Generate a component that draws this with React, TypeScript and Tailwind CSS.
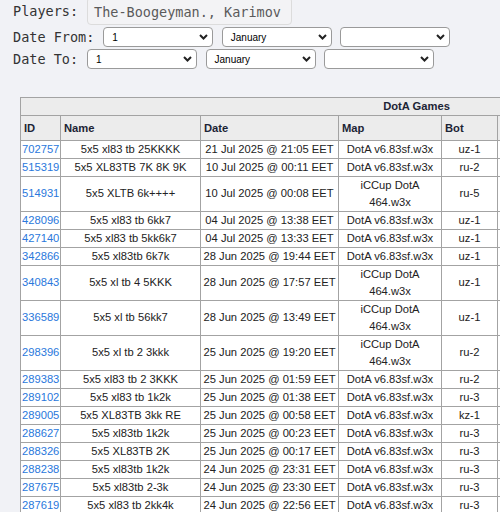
import React from "react";

type Game = { id: string; name: string; date: string; map: string; bot: string };

const DOTA = "DotA v6.83sf.w3x";
const ICCUP = "iCCup DotA 464.w3x";

const games: Game[] = [
    { id: "702757", name: "5x5 xl83 tb 25KKKK", date: "21 Jul 2025 @ 21:05 EET", map: DOTA, bot: "uz-1" },
    { id: "515319", name: "5x5 XL83TB 7K 8K 9K", date: "10 Jul 2025 @ 00:11 EET", map: DOTA, bot: "ru-2" },
    { id: "514931", name: "5x5 XLTB 6k++++", date: "10 Jul 2025 @ 00:08 EET", map: ICCUP, bot: "ru-5" },
    { id: "428096", name: "5x5 xl83 tb 6kk7", date: "04 Jul 2025 @ 13:38 EET", map: DOTA, bot: "uz-1" },
    { id: "427140", name: "5x5 xl83 tb 5kk6k7", date: "04 Jul 2025 @ 13:33 EET", map: DOTA, bot: "uz-1" },
    { id: "342866", name: "5x5 xl83tb 6k7k", date: "28 Jun 2025 @ 19:44 EET", map: DOTA, bot: "uz-1" },
    { id: "340843", name: "5x5 xl tb 4 5KKK", date: "28 Jun 2025 @ 17:57 EET", map: ICCUP, bot: "uz-1" },
    { id: "336589", name: "5x5 xl tb 56kk7", date: "28 Jun 2025 @ 13:49 EET", map: ICCUP, bot: "uz-1" },
    { id: "298396", name: "5x5 xl tb 2 3kkk", date: "25 Jun 2025 @ 19:20 EET", map: ICCUP, bot: "ru-2" },
    { id: "289383", name: "5x5 xl83 tb 2 3KKK", date: "25 Jun 2025 @ 01:59 EET", map: DOTA, bot: "ru-2" },
    { id: "289102", name: "5x5 xl83 tb 1k2k", date: "25 Jun 2025 @ 01:38 EET", map: DOTA, bot: "ru-3" },
    { id: "289005", name: "5x5 XL83TB 3kk RE", date: "25 Jun 2025 @ 00:58 EET", map: DOTA, bot: "kz-1" },
    { id: "288627", name: "5x5 xl83tb 1k2k", date: "25 Jun 2025 @ 00:23 EET", map: DOTA, bot: "ru-3" },
    { id: "288326", name: "5x5 XL83TB 2K", date: "25 Jun 2025 @ 00:17 EET", map: DOTA, bot: "ru-3" },
    { id: "288238", name: "5x5 xl83tb 1k2k", date: "24 Jun 2025 @ 23:31 EET", map: DOTA, bot: "ru-3" },
    { id: "287675", name: "5x5 xl83tb 2-3k", date: "24 Jun 2025 @ 23:30 EET", map: DOTA, bot: "ru-3" },
    { id: "287619", name: "5x5 xl83 tb 2kk4k", date: "24 Jun 2025 @ 22:56 EET", map: DOTA, bot: "ru-3" },
    { id: "287402", name: "", date: "", map: "", bot: "" },
];

function FakeSelect({ value }: { value?: string }) {
    return (
        <div className="flex h-[20px] w-[110px] items-center justify-between rounded-[4px] border border-[#9a9a9a] bg-white pl-[8px] pr-[4px] font-['Liberation_Sans',Arial,sans-serif] text-[10px] text-black">
            <span>{value ?? ""}</span>
            <svg width="9" height="6" viewBox="0 0 9 6" fill="none">
                <path d="M1 1l3.5 3.5L8 1" stroke="#222" strokeWidth="2" />
            </svg>
        </div>
    );
}

const th = "border border-[#a3a3a3] bg-[#ececec] px-[3px] py-[3px] text-left font-bold leading-[18px] text-[#1c2435]";
const td = "border border-[#a3a3a3] px-[1px] py-0 text-center leading-[17px]";

export default function App() {
    return (
        <div className="h-[512px] w-[500px] overflow-hidden bg-[#f1f2f6]">
            <div className="pl-[13px] font-['DejaVu_Sans_Mono',monospace] text-[13.5px] text-[#333]">
                <div className="flex h-[25px] items-end">
                    <span className="mb-[4px] mr-[9px]">Players:</span>
                    <div className="flex h-[28px] w-[205px] items-center rounded-[4px] border border-[#dcdcdc] bg-[#f3f3f5] pl-[6px] pt-[2px] text-[#5a5a5a]">
                        The-Boogeyman., Karimov
                    </div>
                </div>
                <div className="mt-[2px] flex items-center">
                    <span className="mr-[9px]">Date From:</span>
                    <div className="flex gap-[8.5px]">
                        <FakeSelect value="1" />
                        <FakeSelect value="January" />
                        <FakeSelect />
                    </div>
                </div>
                <div className="mt-[2px] flex items-center">
                    <span className="mr-[9px]">Date To:</span>
                    <div className="flex gap-[8.5px]">
                        <FakeSelect value="1" />
                        <FakeSelect value="January" />
                        <FakeSelect />
                    </div>
                </div>
            </div>

            <table className="ml-[20px] mt-[27px] w-[792px] table-fixed border-collapse border border-[#a3a3a3] bg-white font-['Liberation_Sans',Arial,sans-serif] text-[11.2px] text-[#222]">
                <colgroup>
                    <col className="w-[40px]" />
                    <col className="w-[140px]" />
                    <col className="w-[138px]" />
                    <col className="w-[103px]" />
                    <col className="w-[56px]" />
                    <col className="w-[160px]" />
                    <col className="w-[155px]" />
                </colgroup>
                <thead>
                    <tr>
                        <th colSpan={7} className="border border-[#a3a3a3] bg-[#ececec] p-0 text-center font-bold leading-[17px] text-[#1c2435]">
                            DotA Games
                        </th>
                    </tr>
                    <tr>
                        <th className={th}>ID</th>
                        <th className={th}>Name</th>
                        <th className={th}>Date</th>
                        <th className={th}>Map</th>
                        <th className={th}>Bot</th>
                        <th className={th}></th>
                        <th className={th}></th>
                    </tr>
                </thead>
                <tbody>
                    {games.map((g) => (
                        <tr key={g.id} className="h-[18px]">
                            <td className={td}>
                                {g.name && <a href="#" className="text-[#2a78dc]">{g.id}</a>}
                            </td>
                            <td className={td}>{g.name}</td>
                            <td className={td}>{g.date}</td>
                            <td className={td}>{g.map}</td>
                            <td className={td}>{g.bot}</td>
                            <td className={td}></td>
                            <td className={td}></td>
                        </tr>
                    ))}
                </tbody>
            </table>
        </div>
    );
}
